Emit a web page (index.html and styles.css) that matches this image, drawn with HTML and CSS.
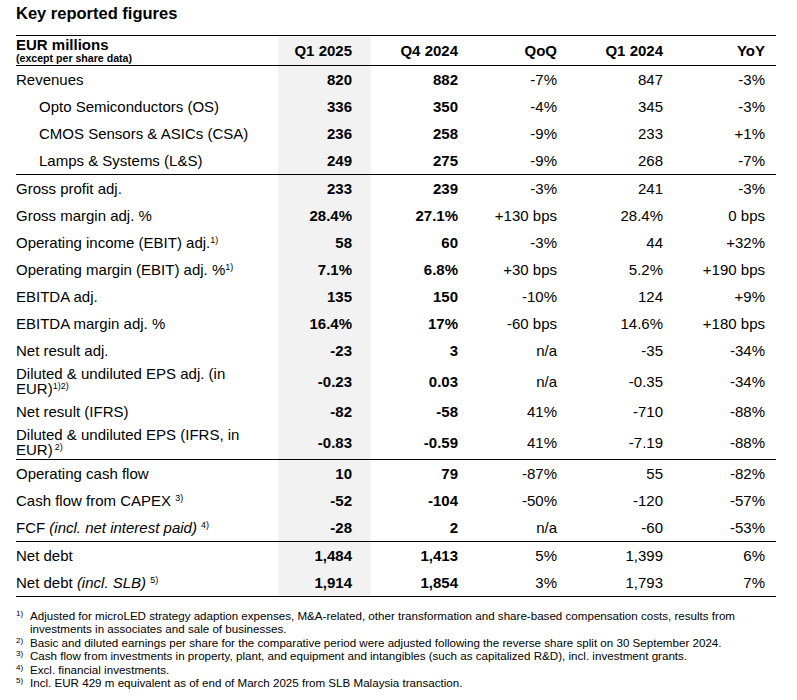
FILE: index.html
```html
<!DOCTYPE html>
<html>
<head>
<meta charset="utf-8">
<link rel="stylesheet" href="styles.css">
</head>
<body>
<div class="page">
  <h1 class="title">Key reported figures</h1>
  <table class="kpi">
    <colgroup>
      <col class="c-label"><col class="c-q1"><col class="c-q4"><col class="c-qoq"><col class="c-py"><col class="c-yoy">
    </colgroup>
    <thead>
      <tr class="head">
        <th class="label"><span class="h-main">EUR millions</span><span class="h-sub">(except per share data)</span></th>
        <th class="num hl">Q1 2025</th>
        <th class="num">Q4 2024</th>
        <th class="num">QoQ</th>
        <th class="num">Q1 2024</th>
        <th class="num last">YoY</th>
      </tr>
    </thead>
    <tbody>
      <tr><td class="label">Revenues</td><td class="num hl b">820</td><td class="num b">882</td><td class="num">-7%</td><td class="num">847</td><td class="num last">-3%</td></tr>
      <tr><td class="label ind">Opto Semiconductors (OS)</td><td class="num hl b">336</td><td class="num b">350</td><td class="num">-4%</td><td class="num">345</td><td class="num last">-3%</td></tr>
      <tr><td class="label ind">CMOS Sensors &amp; ASICs (CSA)</td><td class="num hl b">236</td><td class="num b">258</td><td class="num">-9%</td><td class="num">233</td><td class="num last">+1%</td></tr>
      <tr class="sep"><td class="label ind">Lamps &amp; Systems (L&amp;S)</td><td class="num hl b">249</td><td class="num b">275</td><td class="num">-9%</td><td class="num">268</td><td class="num last">-7%</td></tr>
      <tr><td class="label">Gross profit adj.</td><td class="num hl b">233</td><td class="num b">239</td><td class="num">-3%</td><td class="num">241</td><td class="num last">-3%</td></tr>
      <tr><td class="label">Gross margin adj. %</td><td class="num hl b">28.4%</td><td class="num b">27.1%</td><td class="num">+130 bps</td><td class="num">28.4%</td><td class="num last">0 bps</td></tr>
      <tr><td class="label">Operating income (EBIT) adj.<sup>1)</sup></td><td class="num hl b">58</td><td class="num b">60</td><td class="num">-3%</td><td class="num">44</td><td class="num last">+32%</td></tr>
      <tr><td class="label">Operating margin (EBIT) adj. %<sup>1)</sup></td><td class="num hl b">7.1%</td><td class="num b">6.8%</td><td class="num">+30 bps</td><td class="num">5.2%</td><td class="num last">+190 bps</td></tr>
      <tr><td class="label">EBITDA adj.</td><td class="num hl b">135</td><td class="num b">150</td><td class="num">-10%</td><td class="num">124</td><td class="num last">+9%</td></tr>
      <tr><td class="label">EBITDA margin adj. %</td><td class="num hl b">16.4%</td><td class="num b">17%</td><td class="num">-60 bps</td><td class="num">14.6%</td><td class="num last">+180 bps</td></tr>
      <tr><td class="label">Net result adj.</td><td class="num hl b">-23</td><td class="num b">3</td><td class="num">n/a</td><td class="num">-35</td><td class="num last">-34%</td></tr>
      <tr class="two"><td class="label">Diluted &amp; undiluted EPS adj. (in<br>EUR)<sup>1)2)</sup></td><td class="num hl b">-0.23</td><td class="num b">0.03</td><td class="num">n/a</td><td class="num">-0.35</td><td class="num last">-34%</td></tr>
      <tr><td class="label">Net result (IFRS)</td><td class="num hl b">-82</td><td class="num b">-58</td><td class="num">41%</td><td class="num">-710</td><td class="num last">-88%</td></tr>
      <tr class="two sep"><td class="label">Diluted &amp; undiluted EPS (IFRS, in<br>EUR)<sup class="sp">2)</sup></td><td class="num hl b">-0.83</td><td class="num b">-0.59</td><td class="num">41%</td><td class="num">-7.19</td><td class="num last">-88%</td></tr>
      <tr><td class="label">Operating cash flow</td><td class="num hl b">10</td><td class="num b">79</td><td class="num">-87%</td><td class="num">55</td><td class="num last">-82%</td></tr>
      <tr><td class="label">Cash flow from CAPEX <sup>3)</sup></td><td class="num hl b">-52</td><td class="num b">-104</td><td class="num">-50%</td><td class="num">-120</td><td class="num last">-57%</td></tr>
      <tr class="sep"><td class="label">FCF <i>(incl. net interest paid)</i> <sup>4)</sup></td><td class="num hl b">-28</td><td class="num b">2</td><td class="num">n/a</td><td class="num">-60</td><td class="num last">-53%</td></tr>
      <tr><td class="label">Net debt</td><td class="num hl b">1,484</td><td class="num b">1,413</td><td class="num">5%</td><td class="num">1,399</td><td class="num last">6%</td></tr>
      <tr class="sep"><td class="label">Net debt <i>(incl. SLB)</i> <sup>5)</sup></td><td class="num hl b">1,914</td><td class="num b">1,854</td><td class="num">3%</td><td class="num">1,793</td><td class="num last">7%</td></tr>
    </tbody>
  </table>
  <ol class="notes">
    <li><span class="mark">1)</span><span class="ntext">Adjusted for microLED strategy adaption expenses, M&amp;A-related, other transformation and share-based compensation costs, results from investments in associates and sale of businesses.</span></li>
    <li><span class="mark">2)</span><span class="ntext">Basic and diluted earnings per share for the comparative period were adjusted following the reverse share split on 30 September 2024.</span></li>
    <li><span class="mark">3)</span><span class="ntext">Cash flow from investments in property, plant, and equipment and intangibles (such as capitalized R&amp;D), incl. investment grants.</span></li>
    <li><span class="mark">4)</span><span class="ntext">Excl. financial investments.</span></li>
    <li><span class="mark">5)</span><span class="ntext">Incl. EUR 429 m equivalent as of end of March 2025 from SLB Malaysia transaction.</span></li>
  </ol>
</div>
</body>
</html>
```

FILE: styles.css
```css
html, body {
  margin: 0;
  padding: 0;
  background: #ffffff;
}

.page {
  padding: 0 0 0 16px;
  width: 760px;
  font-family: "Liberation Sans", Arial, sans-serif;
  color: #000;
}

.title {
  margin: 0;
  padding-top: 3px;
  height: 32px;
  font-size: 16.5px;
  font-weight: bold;
  line-height: 20px;
}

.kpi {
  width: 760px;
  border-collapse: collapse;
  table-layout: fixed;
  border-top: 1px solid #000;
  border-bottom: 1px solid #000;
  font-size: 15px;
}

.c-label { width: 262px; }
.c-q1 { width: 93px; }
.c-q4 { width: 106px; }
.c-qoq { width: 99px; }
.c-py { width: 106px; }
.c-yoy { width: 94px; }

.kpi th, .kpi td {
  padding: 0;
  height: 27px;
  vertical-align: middle;
  line-height: 17px;
  white-space: nowrap;
}

.kpi .head th {
  height: 28px;
  border-bottom: 1px solid #000;
  font-weight: bold;
}

.kpi th.label {
  text-align: left;
  vertical-align: top;
  padding-top: 1px;
}

.h-main {
  display: block;
  font-size: 15px;
  line-height: 15px;
}

.h-sub {
  display: block;
  font-size: 10.6px;
  line-height: 12px;
}

.kpi td.label {
  text-align: left;
}

.kpi td.ind {
  padding-left: 23px;
}

.num {
  text-align: right;
  padding-right: 19px !important;
}

.num.last {
  padding-right: 11px !important;
}

.hl {
  background: #f2f2f2;
}

.b {
  font-weight: bold;
}

.kpi tr.two td {
  height: 34px;
}

.kpi tr.two td.label {
  line-height: 15.5px;
}

.kpi tr.sep td {
  border-bottom: 1px solid #000;
}

.kpi sup {
  font-size: 9px;
  line-height: 0;
  vertical-align: 5px;
}

.kpi sup.sp {
  margin-left: 2px;
}

.notes {
  list-style: none;
  margin: 0;
  padding: 12px 0 0 0;
  font-size: 11.6px;
  line-height: 13.4px;
  width: 760px;
}

.notes li {
  display: flex;
}

.mark {
  flex: 0 0 14px;
  font-size: 8px;
  line-height: 10px;
}

.ntext {
  flex: 1;
  padding-right: 10px;
}
```
